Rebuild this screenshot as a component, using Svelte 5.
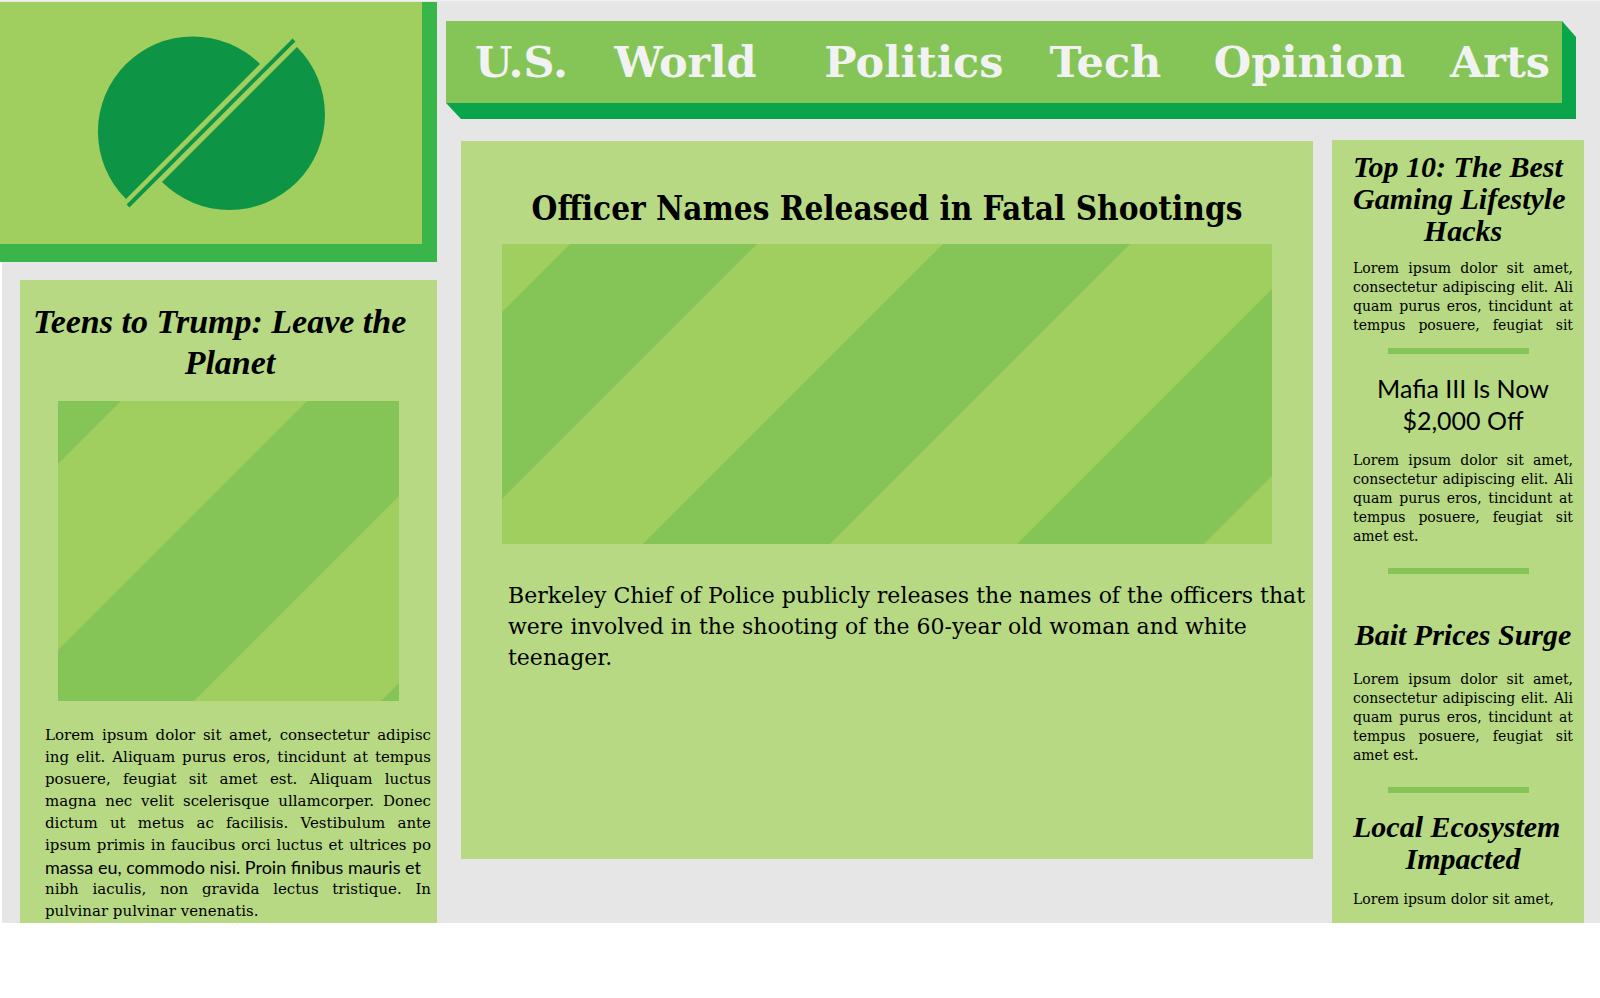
<script>
  const sections = ['U.S.', 'World', 'Politics', 'Tech', 'Opinion', 'Arts'];

  const teaser = [
    'Lorem ipsum dolor sit amet,',
    'consectetur adipiscing elit. Ali',
    'quam purus eros, tincidunt at',
    'tempus posuere, feugiat sit'
  ];

  const stories = [
    { title: 'Top 10: The Best Gaming Lifestyle Hacks', kind: 'first', lines: teaser, end: '' },
    { title: 'Mafia III Is Now $2,000 Off', kind: 'plain', lines: teaser, end: 'amet est.' },
    { title: 'Bait Prices Surge', kind: 'roomy', lines: teaser, end: 'amet est.' },
    { title: 'Local Ecosystem Impacted', kind: 'last', lines: [], end: 'Lorem ipsum dolor sit amet,' }
  ];

  const article = [
    { text: 'Lorem ipsum dolor sit amet, consectetur adipisc' },
    { text: 'ing elit. Aliquam purus eros, tincidunt at tempus' },
    { text: 'posuere, feugiat sit amet est. Aliquam luctus' },
    { text: 'magna nec velit scelerisque ullamcorper. Donec' },
    { text: 'dictum ut metus ac facilisis. Vestibulum ante' },
    { text: 'ipsum primis in faucibus orci luctus et ultrices po' },
    { text: 'massa eu, commodo nisi. Proin finibus mauris et', sans: true },
    { text: 'nibh iaculis, non gravida lectus tristique. In' },
    { text: 'pulvinar pulvinar venenatis.', end: true }
  ];
</script>

<div class="page">
  <div class="left">
    <a class="logo" href="#home" aria-label="Home">
      <svg viewBox="0 0 422 242" width="422" height="242" aria-hidden="true">
        <path d="M126 197A95 95 0 0 1 260 62Z" />
        <path d="M297 45A95 95 0 0 1 162 180Z" />
        <path class="bar" d="M294 38L128 204" />
      </svg>
    </a>
    <div class="gutter">
      <article class="card feature">
        <h2>Teens to Trump: Leave the Planet</h2>
        <svg class="picture" viewBox="0 0 341 300" preserveAspectRatio="xMinYMin slice" aria-hidden="true">
          <rect width="341" height="300" fill="#a1cf5f" />
          <path fill="#85c558" d="M0 0H63L0 63ZM249 0H436L136 300H-51ZM623 0H810L510 300H323Z" />
        </svg>
        <p>
          {#each article as line}
            <span class="line" class:sans={line.sans} class:end={line.end}>{line.text}</span>
          {/each}
        </p>
      </article>
    </div>
  </div>

  <div class="right">
    <div class="banner">
      <nav>
        {#each sections as name}
          <a href="#{name}">{name}</a>
        {/each}
      </nav>
    </div>

    <div class="columns">
      <main class="card">
        <h1>Officer Names Released in Fatal Shootings</h1>
        <svg class="picture" viewBox="0 0 770 300" preserveAspectRatio="xMinYMin slice" aria-hidden="true">
          <rect width="770" height="300" fill="#a1cf5f" />
          <path fill="#85c558" d="M68 0H255L-45 300H-232ZM441 0H628L328 300H141ZM815 0H1002L702 300H515Z" />
        </svg>
        <p>Berkeley Chief of Police publicly releases the names of the officers that were involved in the shooting of the 60-year old woman and white teenager.</p>
      </main>

      <aside class="card">
        {#each stories as story, i}
          {#if i > 0}<hr />{/if}
          <article class={story.kind}>
            <h3>{story.title}</h3>
            <p>
              {#each story.lines as text}
                <span class="line">{text}</span>
              {/each}
              {#if story.end}<span class="line end">{story.end}</span>{/if}
            </p>
          </article>
        {/each}
      </aside>
    </div>
  </div>
</div>

<style>
  :global(body) {
    margin: 0;
    background: #fff;
  }
  .page {
    display: grid;
    grid-template-columns: 437px minmax(0, 1fr);
    border-top: 1px solid #f2f2f2;
    background: #e6e6e6;
    color: #000;
    font-family: 'DejaVu Serif', serif;
  }
  h1, h2, h3, p {
    margin: 0;
  }
  .card {
    background: #b7d984;
  }
  .picture {
    display: block;
    width: 100%;
    height: 300px;
  }
  .line {
    display: block;
    white-space: nowrap;
    text-align: justify;
    text-align-last: justify;
  }
  .line.end {
    text-align-last: left;
  }

  .left {
    display: flex;
    flex-direction: column;
    padding-top: 1px;
  }
  .logo {
    display: block;
    background: #a1cf5f;
    border-right: 15px solid #3ab54a;
    border-bottom: 18px solid #3ab54a;
  }
  .logo svg {
    display: block;
    fill: #0d9444;
  }
  .logo .bar {
    stroke: #0d9444;
    stroke-width: 4;
  }
  .gutter {
    display: flex;
    flex: 1;
    border-left: 2px solid #fff;
    padding: 18px 0 0 18px;
  }
  .feature {
    flex: 1;
    min-width: 0;
  }
  .feature h2 {
    padding: 21px 10px 18px 13px;
    font: italic bold 34px/41px 'Liberation Serif', serif;
    text-align: left;
    text-align-last: center;
  }
  .feature .picture {
    width: 341px;
    margin-left: 38px;
  }
  .feature p {
    padding: 23px 6px 0 25px;
    font-size: 15px;
    line-height: 22px;
  }
  .feature .sans {
    font-family: Lato, sans-serif;
    font-size: 18px;
    text-align-last: left;
  }

  .banner {
    margin: 20px 24px 0 9px;
    padding: 0 14px 16px 0;
    background: #0aa54a;
    clip-path: polygon(0 0, calc(100% - 14px) 0, 100% 16px, 100% 100%, 15px 100%, 0 calc(100% - 16px));
  }
  nav {
    display: grid;
    grid-template-columns: 139fr 210fr 225fr 164fr 236fr 112fr;
    padding-left: 29px;
    background: #85c558;
  }
  nav a {
    min-width: 0;
    color: #f2f2f2;
    font-size: 43px;
    font-weight: bold;
    line-height: 82px;
    text-decoration: none;
    white-space: nowrap;
  }
  .columns {
    display: grid;
    grid-template-columns: minmax(0, 1fr) 252px;
    gap: 19px;
    padding: 21px 16px 0 24px;
  }
  main {
    align-self: start;
    margin-top: 1px;
    padding: 44px 41px 186px;
  }
  h1 {
    margin-bottom: 11px;
    font-family: 'DejaVu Serif Condensed', 'DejaVu Serif', serif;
    font-size: 33px;
    line-height: 48px;
    text-align: center;
    white-space: nowrap;
  }
  main p {
    margin: 36px -36px 0 6px;
    font-size: 22px;
    line-height: 31px;
  }

  aside {
    padding: 0 11px 14px 21px;
  }
  aside article {
    padding: 18px 0 22px;
  }
  aside h3 {
    margin-bottom: 15px;
    font: italic bold 30px/32px 'Liberation Serif', serif;
    text-align: left;
    text-align-last: center;
  }
  aside p {
    font-size: 14px;
    line-height: 19px;
  }
  aside .first {
    padding: 11px 0 13px;
  }
  aside .first h3 {
    margin-bottom: 12px;
  }
  aside .plain h3 {
    padding: 0 20px;
    font: 25px/32px Lato, sans-serif;
    text-align: center;
  }
  aside .roomy {
    padding-top: 45px;
  }
  aside .roomy h3 {
    margin-bottom: 19px;
  }
  aside .last {
    padding-bottom: 0;
  }
  hr {
    height: 6px;
    margin: 0 44px 0 35px;
    border: 0;
    background: #85c558;
  }
</style>
